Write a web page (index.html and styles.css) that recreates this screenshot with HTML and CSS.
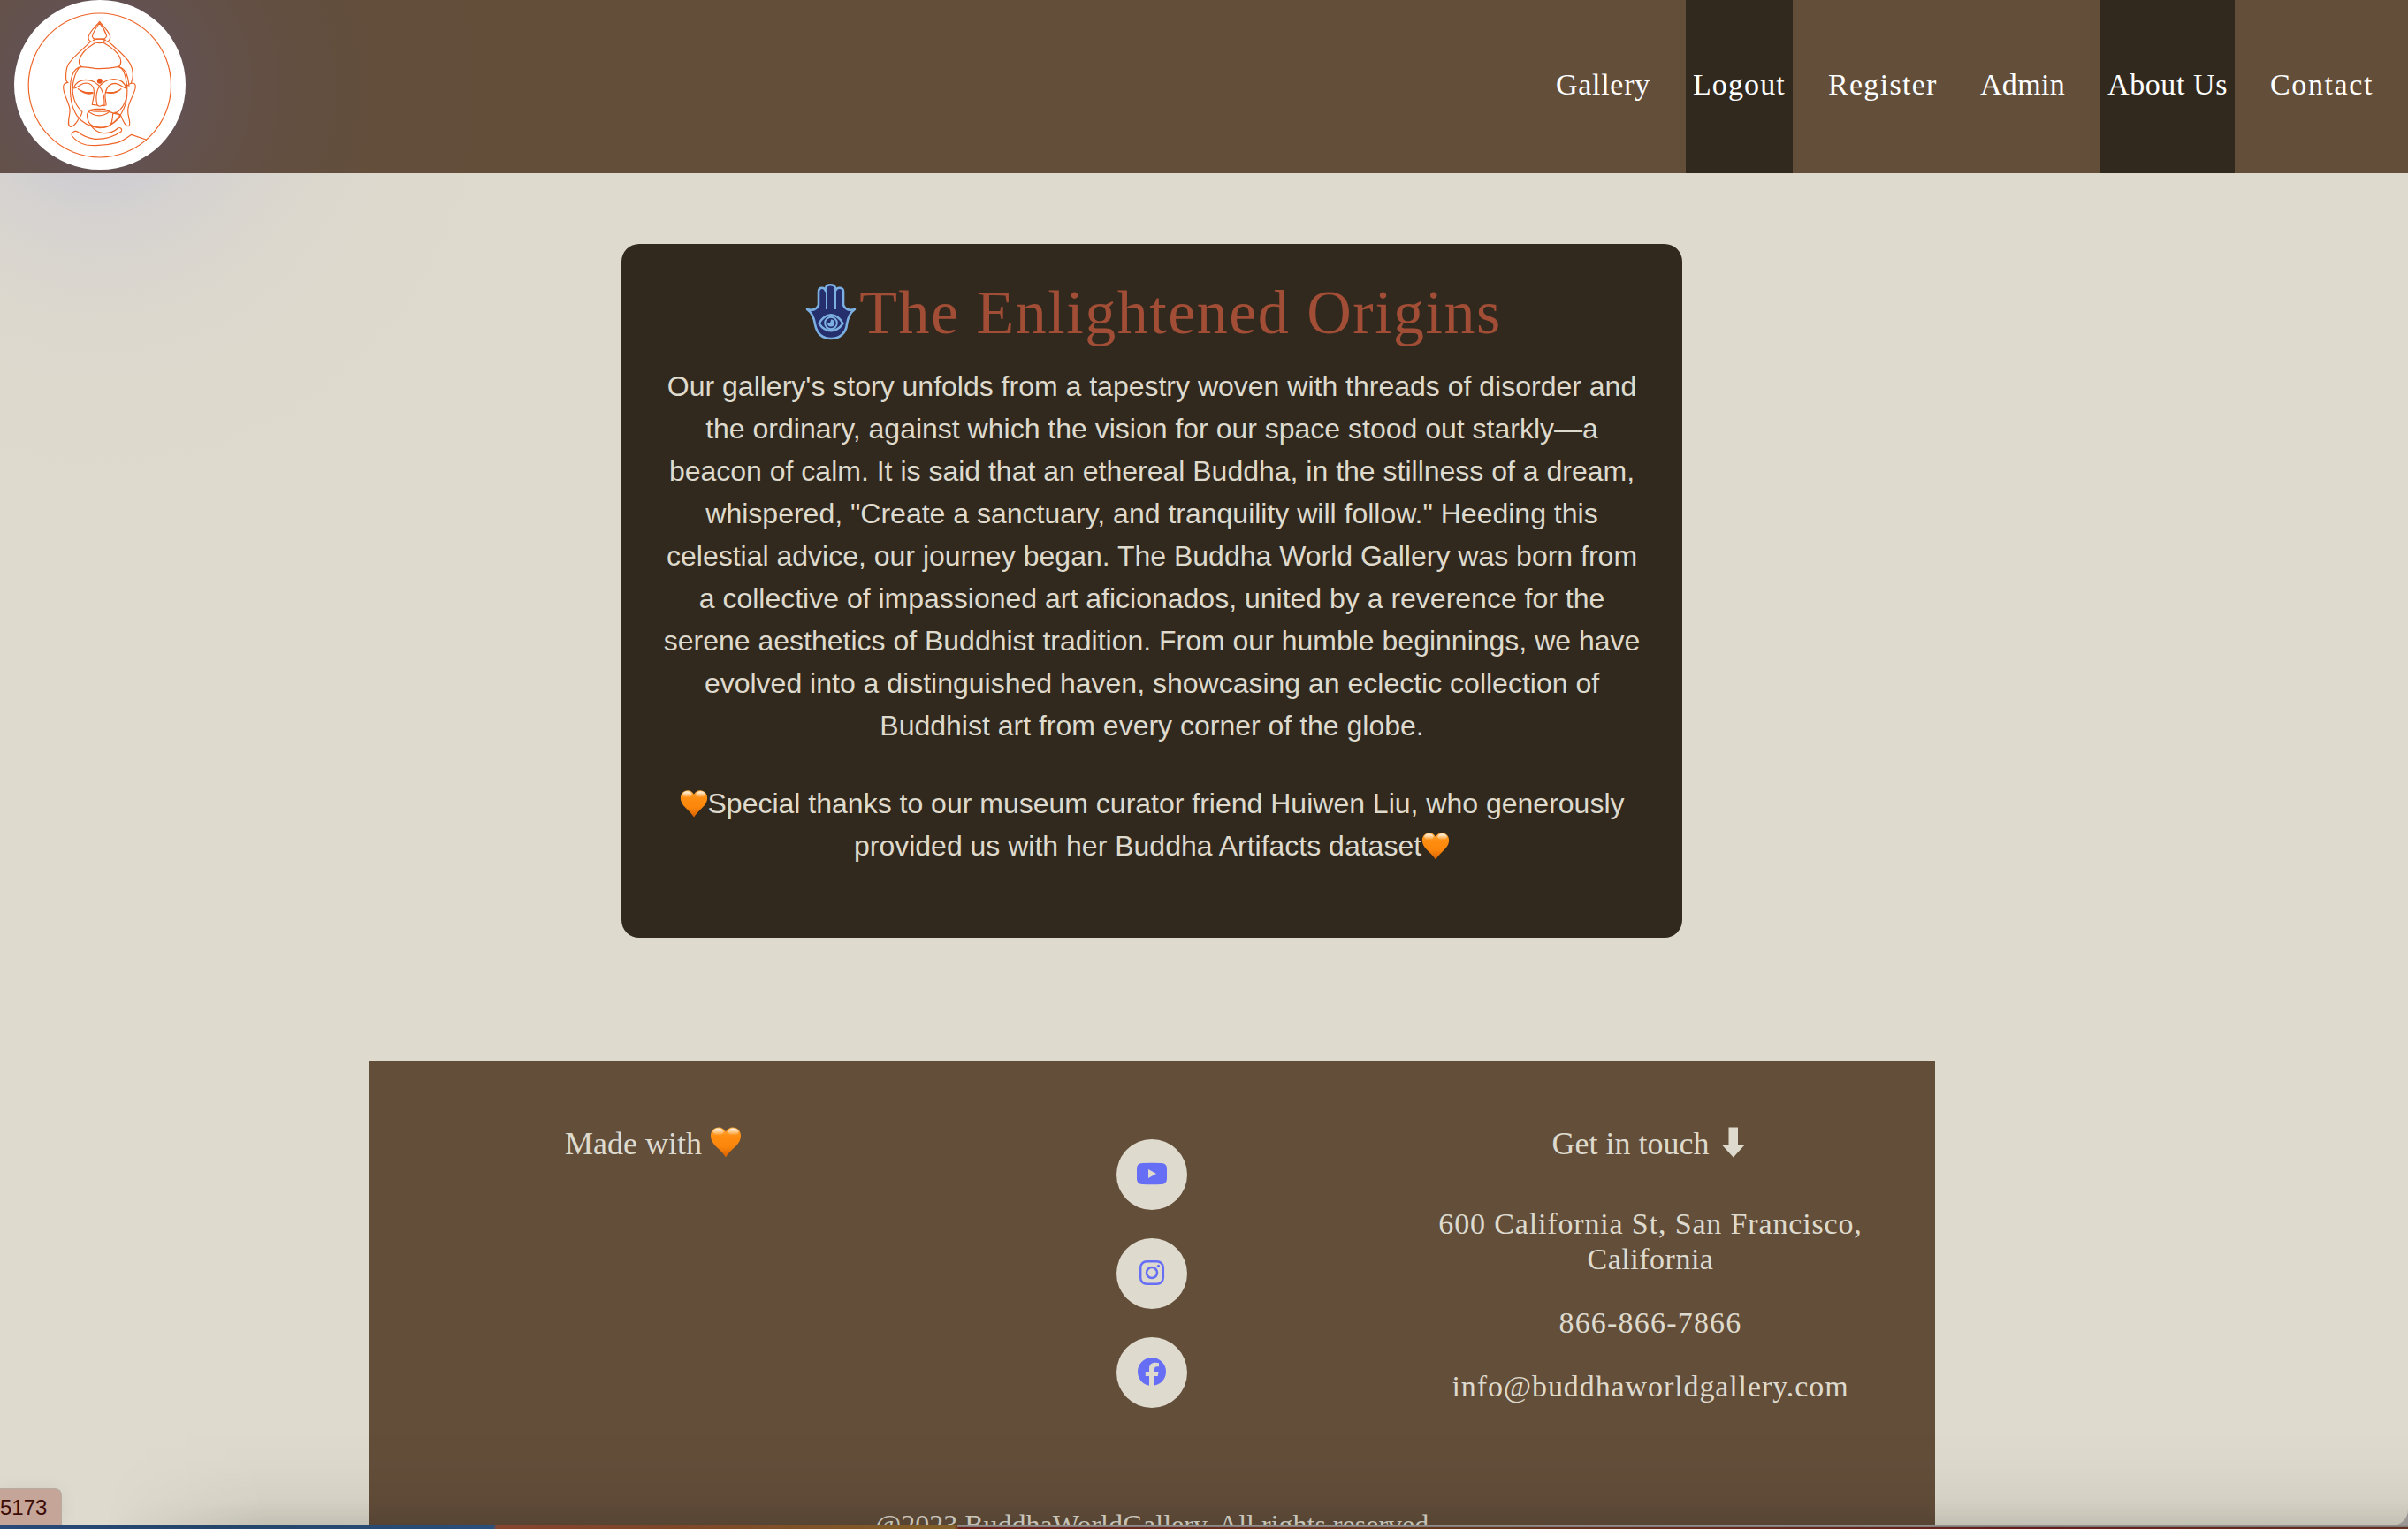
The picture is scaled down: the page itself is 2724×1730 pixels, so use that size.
FILE: index.html
```html
<!DOCTYPE html>
<html lang="en">
<head>
<meta charset="utf-8">
<title>Buddha World Gallery</title>
<link rel="stylesheet" href="styles.css">
</head>
<body>
<svg class="defs" width="0" height="0" aria-hidden="true">
  <defs>
    <linearGradient id="heartFill" x1="0" y1="0" x2="0" y2="1">
      <stop offset="0" stop-color="#ffac3e"/><stop offset=".3" stop-color="#ff8d10"/>
      <stop offset=".65" stop-color="#fb860b"/><stop offset="1" stop-color="#d95f00"/>
    </linearGradient>
    <linearGradient id="heartShine" x1="0" y1="0" x2="0" y2="1">
      <stop offset="0" stop-color="#fff" stop-opacity=".9"/><stop offset="1" stop-color="#fff" stop-opacity="0"/>
    </linearGradient>
    <symbol id="heart" viewBox="0 0 36 36">
      <path fill="url(#heartFill)" d="M18 35.500C16 32 13 29 9.500 25.500C5 21.500 1 17 1 11C1 5.500 5 1.500 10 1.500C13.500 1.500 16.500 3.500 18 6.500C19.500 3.500 22.500 1.500 26 1.500C31 1.500 35 5.500 35 11C35 17 31 21.500 26.500 25.500C23 29 20 32 18 35.500Z"/>
      <ellipse cx="9.500" cy="6.500" rx="6" ry="4" fill="url(#heartShine)"/>
      <ellipse cx="26.500" cy="6.500" rx="6" ry="4" fill="url(#heartShine)"/>
    </symbol>
  </defs>
</svg>

<div class="window">
  <header class="navbar">
    <a class="logo" href="#">
      <svg viewBox="48 0 582 576" aria-label="Buddha World Gallery">
        <ellipse cx="339" cy="288" rx="291" ry="288" fill="#fff"/>
        <g fill="none" stroke="#ee6427" stroke-width="3.500" stroke-linecap="round" stroke-linejoin="round">
          <ellipse cx="338.500" cy="289.500" rx="242" ry="244.500"/>
          <path d="M338 73C327 88 299 110 300 129Q301 141 316 143H358Q373 140 374 127C374 108 349 90 338 73Z"/>
          <path d="M338 78C328 91 318 104 313 124Q315 131 323 132H352Q360 130 362 122C356 103 349 91 338 78Z"/>
          <path d="M321 131L323 143Q338 149 353 143L355 131M316 136Q338 129 359 136"/>
          <path d="M306 142C283 166 247 194 232 218C221 238 224 254 224 272L229 280M369 142C392 163 429 192 443 218C454 240 453 266 445 282"/>
          <path d="M322 146C300 159 275 176 269 204C266 214 271 221 276 227M353 146C378 160 407 180 410 207Q411 219 403 227"/>
          <path d="M276 227Q304 229 322 232Q355 235 403 226"/>
          <path d="M276 227C253 230 244 251 240 277C235 326 242 363 262 394C281 419 308 432 339 434C359 434 378 426 394 408C419 382 435 342 431 292C427 263 423 235 403 226"/>
          <path d="M268 230C247 259 241 307 252 338C258 359 269 369 279 380L275 391C264 407 254 431 239 430C224 425 239 390 237 370C232 342 214 320 215 293C216 284 221 281 231 280"/>
          <path d="M405 229C426 231 435 260 438 292M429 296C433 288 441 283 450 282C459 282 461 290 459 300C454 325 435 347 434 374C433 397 447 420 437 428C422 430 416 402 408 389L390 381"/>
          <path d="M249 299C256 281 270 272 291 271C316 271 333 283 344 303C353 321 355 341 354 359L345 358M429 300C423 281 408 269 386 269C360 270 342 282 332 303C325 322 326 342 330 357"/>
          <path d="M252 300C265 298 271 284 290 282C311 282 321 296 319 318C319 334 313 345 313 355L330 357Q338 364 345 358L360 357C361 344 355 336 357 319C361 296 370 283 391 283C409 285 414 296 428 300"/>
          <path d="M265 302Q278 309 288 314H315M265 302Q290 324 315 316M360 314H386Q402 311 411 302Q391 322 360 314"/>
          <path d="M302 380L304 374L323 370H354L372 379M304 375Q322 380 339 378Q354 380 370 376M303 380C323 397 350 397 370 380"/>
          <path d="M302 380C291 384 297 404 301 415C310 432 331 433 348 432Q374 433 379 415Q383 397 383 386M370 379Q385 384 406 390Q411 405 374 422M384 386C407 380 424 356 431 323"/>
          <path d="M307 425C319 440 329 449 345 451C370 454 389 446 400 435C409 430 417 440 411 447C385 465 359 473 323 472C294 470 278 459 264 448C254 441 239 451 245 462C255 475 274 488 293 492C332 496 369 492 399 484C421 477 430 467 446 457L496 474"/>
        </g>
        <path d="M270 304Q286 314 315 314Q296 323 270 304ZM362 314Q386 316 408 304Q386 323 362 314Z" fill="#ee6427"/>
        <circle cx="338.500" cy="275" r="9" fill="#e95620"/>
      </svg>
    </a>
    <nav class="links">
      <a class="link gallery" href="#">Gallery</a>
      <a class="link logout active" href="#">Logout</a>
      <a class="link register" href="#">Register</a>
      <a class="link admin" href="#">Admin</a>
      <a class="link about active" href="#">About Us</a>
      <a class="link contact" href="#">Contact</a>
    </nav>
  </header>

  <main class="card">
    <h1 class="title">
      <svg class="hamsa" viewBox="0 0 60 66" aria-hidden="true">
        <path d="M3 30C10 32 14 30 16 25V10C16 5 22 4 24 9V6C25 1 34 1 35 6V9C37 4 44 5 44 10V25C46 30 50 32 57 30C51 34 49 40 48 47C47 57 40 63 30 63C20 63 14 57 12 47C11 40 9 34 3 30Z" fill="#252f6e" stroke="#7db0e2" stroke-width="2.600" stroke-linejoin="round"/>
        <path d="M25 8V30M35 8V30" fill="none" stroke="#7db0e2" stroke-width="2"/>
        <path d="M16.500 46C24 33 36 33 43.500 46C36 57 24 57 16.500 46Z" fill="#252f6e" stroke="#7db0e2" stroke-width="2.400"/>
        <circle cx="30" cy="45.500" r="6.800" fill="#252f6e" stroke="#7db0e2" stroke-width="2"/>
        <path d="M30 41.500A4 4 0 1 1 26 45.500Q30 46.500 30 41.500Z" fill="#7db0e2"/>
      </svg><span>The Enlightened Origins</span>
    </h1>
    <p class="story">Our gallery's story unfolds from a tapestry woven with threads of disorder and<br>
      the ordinary, against which the vision for our space stood out starkly—a<br>
      beacon of calm. It is said that an ethereal Buddha, in the stillness of a dream,<br>
      whispered, "Create a sanctuary, and tranquility will follow." Heeding this<br>
      celestial advice, our journey began. The Buddha World Gallery was born from<br>
      a collective of impassioned art aficionados, united by a reverence for the<br>
      serene aesthetics of Buddhist tradition. From our humble beginnings, we have<br>
      evolved into a distinguished haven, showcasing an eclectic collection of<br>
      Buddhist art from every corner of the globe.</p>
    <p class="story thanks"><svg class="heart"><use href="#heart"/></svg>Special thanks to our museum curator friend Huiwen Liu, who generously<br>
      provided us with her Buddha Artifacts dataset<svg class="heart"><use href="#heart"/></svg></p>
  </main>

  <footer class="footer">
    <div class="columns">
      <section class="column">
        <h2 class="heading">Made with <svg class="heart big"><use href="#heart"/></svg></h2>
      </section>
      <section class="column socials">
        <a class="social" href="#" aria-label="YouTube"><svg width="36" height="36" viewBox="0 0 36 36"><path fill="#666ef6" fill-rule="evenodd" d="M7 5Q18 4.500 29 5Q35 5.500 35 11V23Q35 28.500 29 29Q18 29.500 7 29Q1 28.500 1 23V11Q1 5.500 7 5ZM14 12V22L23 17Z"/></svg></a>
        <a class="social" href="#" aria-label="Instagram"><svg width="36" height="36" viewBox="0 0 36 36" fill="none" stroke="#666ef6"><rect x="5.200" y="4.200" width="25.600" height="25.600" rx="7" stroke-width="2.500"/><circle cx="18" cy="17" r="6" stroke-width="2.500"/><circle cx="25.500" cy="9.500" r="1.700" fill="#666ef6" stroke="none"/></svg></a>
        <a class="social" href="#" aria-label="Facebook"><svg width="36" height="36" viewBox="0 0 36 36"><path fill="#666ef6" d="M14 32.500C7 31 2 24.500 2 17A16 16 0 0 1 34 17C34 24.500 29 31 21 32.500V22H24.800L25.600 17H21V14Q21 11.200 24 11.200H26V7.200Q24 6.800 22 6.800C17.500 6.800 15 9.500 15 13.500V17H10.800V22H15V32.500Z"/></svg></a>
      </section>
      <section class="column">
        <h2 class="heading">Get in touch <svg class="arrow" viewBox="0 0 36 36"><path fill="#dedacd" d="M13.500 1.500H24V21.500H31.500L18.800 35.500L6 21.500H13.500Z"/></svg></h2>
        <address class="details">
          <p><span class="street">600 California St, San Francisco,</span><br><span class="state">California</span></p>
          <p class="phone">866-866-7866</p>
          <p class="email">info@buddhaworldgallery.com</p>
        </address>
      </section>
    </div>
    <p class="copyright">@2023 BuddhaWorldGallery. All rights reserved</p>
  </footer>
  <div class="glow"></div>
  <div class="shade"></div>
  <div class="status">5173</div>
</div>
<div class="desktop"></div>
</body>
</html>
```
FILE: styles.css
```css
* { box-sizing: border-box; }

body {
  margin: 0;
  height: 1730px;
  overflow: hidden;
  color: #dedacd;
  background: #9b9795;
}

h1, h2, p { margin: 0; font-weight: 400; }
a { color: inherit; text-decoration: none; }
.defs { position: absolute; }

.window {
  position: relative;
  height: 1726px;
  overflow: hidden;
  background: #dedacd;
  border-bottom-right-radius: 18px;
}

/* Navigation */
.navbar {
  display: flex;
  justify-content: space-between;
  height: 196px;
  padding: 0 30px 0 16px;
  background: #634e3a;
}
.logo { position: relative; z-index: 2; width: 194px; height: 192px; }
.logo svg { display: block; width: 194px; height: 192px; }
.links { display: flex; gap: 32px; }
.link {
  padding: 77px 0 0 8px;
  font: 34px/38px "Liberation Serif", serif;
  color: #fff;
  white-space: nowrap;
}
.active { background: #32291e; }
.gallery { width: 123px; letter-spacing: .7px; }
.logout { width: 121px; letter-spacing: 1.1px; }
.register { width: 140px; letter-spacing: 1.3px; }
.admin { width: 112px; letter-spacing: .3px; }
.about { width: 152px; letter-spacing: .6px; }
.contact { width: 134px; letter-spacing: 1.6px; }

/* About card */
.card {
  width: 1200px;
  height: 785px;
  margin: 80px 0 0 703px;
  padding-top: 42px;
  border-radius: 20px;
  background: #32291e;
  text-align: center;
}
.title {
  display: flex;
  justify-content: center;
  height: 72px;
  margin-bottom: 23px;
  padding-left: 3px;
  font: 70px/72px "Liberation Serif", serif;
  letter-spacing: 1.5px;
  color: #a24e36;
}
.hamsa { width: 60px; height: 66px; margin: 2px 2px 0 0; }
.story {
  font: 32px/48px "Liberation Sans", sans-serif;
  white-space: nowrap;
}
.thanks { margin-top: 40px; }
.heart {
  display: inline-block;
  width: 32px;
  height: 32px;
  vertical-align: -5px;
}

/* Footer */
.footer {
  width: 1772px;
  height: 565px;
  margin: 140px 0 0 417px;
  padding: 0 40px;
  background: #634e3a;
  text-align: center;
}
.columns { display: grid; grid-template-columns: repeat(3, 1fr); height: 504px; padding-top: 73px; }
.heading { height: 40px; font: 36px/40px "Liberation Serif", serif; white-space: nowrap; }
.heading .big, .arrow { display: inline-block; width: 36px; height: 36px; vertical-align: -4px; }
.socials { display: flex; flex-direction: column; align-items: center; gap: 32px; padding-top: 15px; }
.social {
  display: flex;
  align-items: center;
  justify-content: center;
  width: 80px;
  height: 80px;
  border-radius: 50%;
  background: #dedacd;
}
.details {
  display: flex;
  flex-direction: column;
  gap: 32px;
  margin-top: 51px;
  font: 34px/40px "Liberation Serif", serif;
}
.street { letter-spacing: .85px; }
.state { letter-spacing: .5px; }
.phone { letter-spacing: 1.2px; }
.email { letter-spacing: .9px; }
.copyright { font: 32px/40px "Liberation Serif", serif; }

/* Overlays */
.glow {
  position: absolute;
  z-index: 1;
  inset: 0 auto auto 0;
  width: 620px;
  height: 600px;
  background: radial-gradient(circle 460px at 112px 97px, rgba(100,108,255,.13) 0, rgba(100,108,255,.12) 95px, rgba(100,108,255,.07) 150px, rgba(100,108,255,.035) 220px, rgba(100,108,255,.012) 310px, rgba(100,108,255,0) 460px);
}
.shade {
  position: absolute;
  inset: auto 0 0 0;
  height: 110px;
  background: linear-gradient(to bottom, transparent, rgba(0,0,0,.012) 40%, rgba(0,0,0,.045) 75%, rgba(0,0,0,.12));
  mask-image: linear-gradient(to right, transparent 120px, #000 300px);
}
.status {
  position: absolute;
  inset: auto auto 0 0;
  width: 70px;
  height: 42px;
  border: solid #b3aaa0;
  border-width: 1px 1px 0 0;
  border-top-right-radius: 8px;
  background: #c6a599;
  box-shadow: 0 0 20px rgba(0,0,0,.06);
  font: 24px/42px "Liberation Sans", sans-serif;
  color: #3c0c08;
}
.desktop {
  height: 4px;
  background:
    linear-gradient(#9b9795, #77706f) 1083px 0 / 100% 2px no-repeat,
    linear-gradient(to right, #294a7a 0, #24446a 240px, #2b4f7b 558px, #87452f 562px, #7d4628 750px, #82602a 1080px, #6b201b 1085px, #66371f 1600px, #651e1b 2300px, #643020);
}
```
